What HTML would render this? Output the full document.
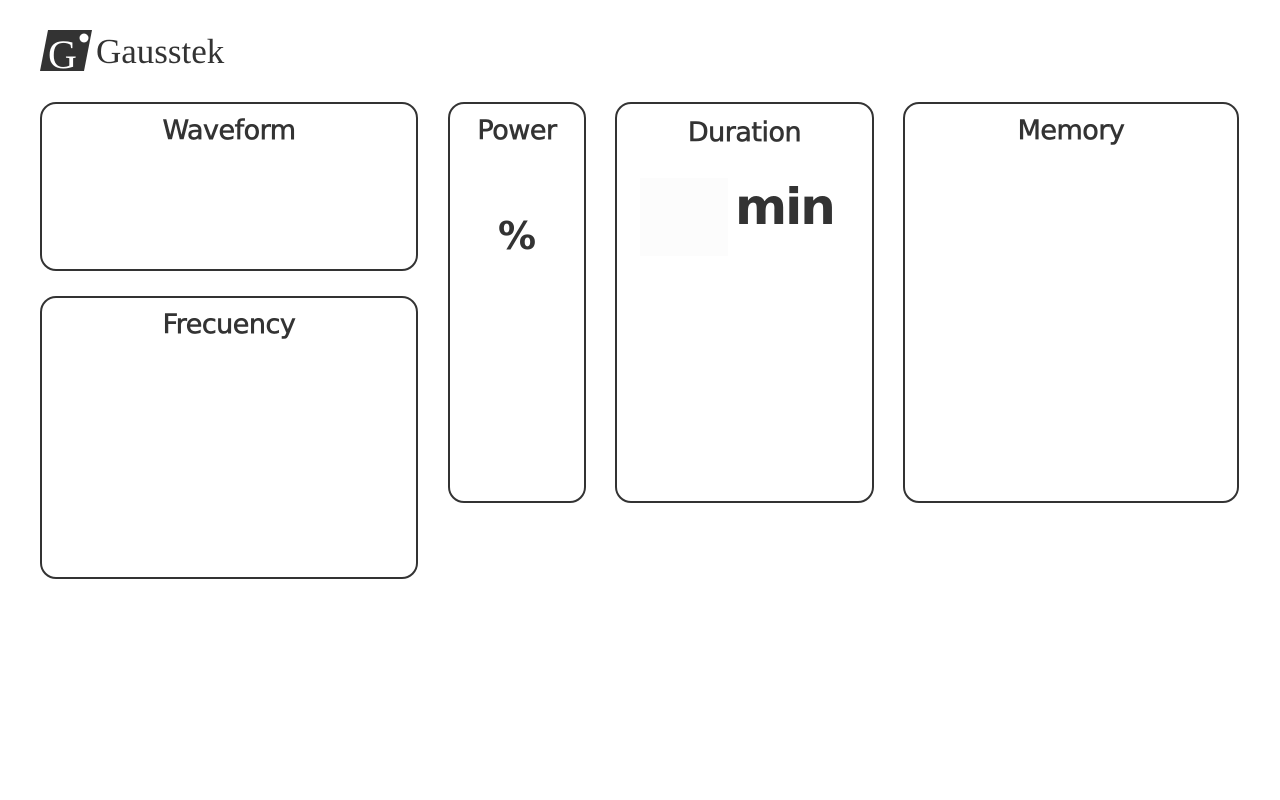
<!DOCTYPE html>
<html><head><style>
body{margin:0;width:1280px;height:800px;background:#fff;position:relative;font-family:"DejaVu Sans","Liberation Sans",sans-serif;color:#333;overflow:hidden}
.b{position:absolute;border:2px solid #333;border-radius:16px;box-sizing:border-box}
.t{position:absolute;left:0;right:0;text-align:center;font-size:27px;letter-spacing:-0.5px;top:11px;-webkit-text-stroke:0.6px #333}
</style></head><body>
<svg style="position:absolute;left:40px;top:30px" width="52" height="41" viewBox="0 0 52 41">
<polygon points="8,0 52,0 44,41 0,41" fill="#333"/>
<text x="8" y="38" font-family="Liberation Serif,serif" font-size="40" fill="#fff">G</text>
<circle cx="44" cy="8" r="4.5" fill="#fff"/>
</svg>
<div style="position:absolute;left:96px;top:32px;font-family:'Liberation Serif',serif;font-size:35px;color:#333">Gausstek</div>
<div class="b" style="left:40px;top:102px;width:378px;height:169px"><div class="t">Waveform</div></div>
<div class="b" style="left:40px;top:296px;width:378px;height:283px"><div class="t">Frecuency</div></div>
<div class="b" style="left:448px;top:102px;width:138px;height:401px"><div class="t">Power</div>
<div style="position:absolute;left:0;right:0;top:110px;text-align:center;font-size:38px;font-weight:bold">%</div></div>
<div class="b" style="left:615px;top:102px;width:259px;height:401px"><div class="t" style="top:13px">Duration</div>
<div style="position:absolute;left:23px;top:74px;width:88px;height:78px;background:#fcfcfc"></div>
<div style="position:absolute;left:118px;top:74px;font-size:50px;font-weight:bold;letter-spacing:-2px">min</div></div>
<div class="b" style="left:903px;top:102px;width:336px;height:401px"><div class="t">Memory</div></div>
</body></html>
